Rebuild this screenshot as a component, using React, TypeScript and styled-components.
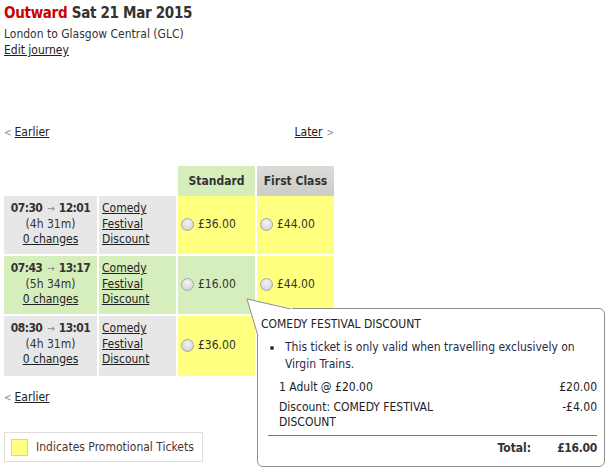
import styled, { createGlobalStyle } from "styled-components";

const GlobalStyle = createGlobalStyle`
  html, body {
    margin: 0;
    padding: 0;
    background: #fff;
  }
  body {
    font-family: "DejaVu Sans Condensed", "DejaVu Sans", sans-serif;
    font-size: 12px;
    color: #333;
  }
`;

const Page = styled.div`
  position: relative;
  width: 606px;
  height: 467px;
  box-sizing: border-box;
  padding: 3px 4px 0;
  overflow: hidden;
`;

const Heading = styled.h2`
  margin: 0;
  font-size: 15px;
  letter-spacing: -0.3px;
  line-height: 21px;
  font-weight: bold;
  color: #333;
  span {
    color: #cc0000;
  }
`;

const Route = styled.div`
  margin-top: 3px;
  line-height: 15px;
`;

const Link = styled.a`
  color: #222;
  text-decoration: underline;
  cursor: pointer;
`;

const EditRow = styled.div`
  margin-top: 1px;
  line-height: 15px;
`;

const Pager = styled.div<{ $top: number }>`
  display: flex;
  justify-content: space-between;
  width: 330px;
  margin-top: ${(p) => p.$top}px;
  line-height: 15px;
`;

const Chevron = styled.span<{ $side: "left" | "right" }>`
  color: #888;
  font-size: 10px;
  margin: ${(p) => (p.$side === "left" ? "0 3px 0 0" : "0 0 0 4px")};
`;

const Table = styled.div`
  width: 330px;
  margin-top: 26px;
  display: flex;
  flex-direction: column;
`;

const Row = styled.div<{ $height: number; $gap: number }>`
  display: grid;
  grid-template-columns: 93px 77px 77px 77px;
  column-gap: 2px;
  height: ${(p) => p.$height}px;
  margin-bottom: ${(p) => p.$gap}px;
`;

const HeadCell = styled.div<{ $tone?: "standard" | "first" }>`
  display: flex;
  align-items: center;
  justify-content: center;
  font-weight: bold;
  color: #333;
  background: ${(p) =>
    p.$tone === "standard"
      ? "#d6edbc"
      : p.$tone === "first"
      ? "linear-gradient(#dcdbd8, #cdccc9)"
      : "transparent"};
`;

const TimeCell = styled.div<{ $selected?: boolean }>`
  background: ${(p) => (p.$selected ? "#d6edbc" : "#e7e7e7")};
  text-align: center;
  padding-top: 5px;
  line-height: 15.5px;
  b {
    color: #333;
    letter-spacing: -0.6px;
  }
`;

const Arrow = styled.span`
  color: #888;
  font-size: 10px;
  margin: 0 4px 0 5px;
`;

const TicketCell = styled.div<{ $selected?: boolean }>`
  background: ${(p) => (p.$selected ? "#d6edbc" : "#e7e7e7")};
  padding: 5px 0 0 3px;
  line-height: 15.5px;
  a {
    display: block;
    width: fit-content;
  }
`;

const PriceCell = styled.div<{ $selected?: boolean }>`
  background: ${(p) => (p.$selected ? "#d6edbc" : "#ffff80")};
  display: flex;
  align-items: center;
  padding-left: 3px;
  padding-bottom: 2px;
  gap: 4px;
`;

const Radio = styled.span`
  width: 11px;
  height: 11px;
  border-radius: 50%;
  border: 1px solid #a8a8a8;
  background: radial-gradient(circle at 50% 35%, #f4f4f4 0%, #d9d9d9 70%, #c9c9c9 100%);
  box-sizing: content-box;
  flex: none;
`;

const Legend = styled.div`
  display: flex;
  align-items: center;
  gap: 8px;
  width: 199px;
  height: 30px;
  box-sizing: border-box;
  border: 1px solid #dedede;
  margin-top: 27px;
  padding-left: 6px;
  color: #4a3434;
`;

const Swatch = styled.span`
  width: 15px;
  height: 15px;
  background: #ffff80;
  border: 1px solid #cfcfcf;
`;

const Popup = styled.div`
  position: absolute;
  left: 257px;
  top: 308px;
  width: 348px;
  height: 159px;
  box-sizing: border-box;
  border: 1px solid #8f8f8f;
  border-radius: 6px;
  background: #fff;
  padding: 8px 7px 0 3px;
  line-height: 15px;
  color: #222;
`;

const Pointer = styled.svg`
  position: absolute;
  left: -13px;
  top: -12px;
  overflow: visible;
`;

const PopupTitle = styled.div`
  color: #222;
`;

const Bullets = styled.ul`
  list-style: none;
  margin: 7px 0 0;
  padding: 0 0 0 24px;
  line-height: 16.5px;
  color: #2a2a44;
  li {
    position: relative;
  }
  li::before {
    content: "";
    position: absolute;
    left: -15px;
    top: 7px;
    width: 4px;
    height: 4px;
    border-radius: 50%;
    background: #333;
  }
`;

const Line = styled.div<{ $top: number }>`
  display: grid;
  grid-template-columns: 165px 1fr;
  margin: ${(p) => p.$top}px 0 0 18px;
  span:last-child {
    text-align: right;
  }
`;

const Rule = styled.hr`
  border: 0;
  border-top: 1px solid #6b7887;
  margin: 5px 0 0 7px;
`;

const TotalRow = styled.div`
  display: flex;
  justify-content: flex-end;
  gap: 26px;
  margin-top: 5px;
  font-weight: bold;
  color: #333;
  span:last-child {
    letter-spacing: -0.3px;
  }
`;

const journeys = [
  { dep: "07:30", arr: "12:01", dur: "(4h 31m)", std: "£36.00", first: "£44.00" },
  { dep: "07:43", arr: "13:17", dur: "(5h 34m)", std: "£16.00", first: "£44.00", selected: true },
  { dep: "08:30", arr: "13:01", dur: "(4h 31m)", std: "£36.00" },
];

export default function App() {
  return (
    <>
      <GlobalStyle />
      <Page>
        <Heading>
          <span>Outward</span> Sat 21 Mar 2015
        </Heading>
        <Route>London to Glasgow Central (GLC)</Route>
        <EditRow>
          <Link>Edit journey</Link>
        </EditRow>

        <Pager $top={67}>
          <span>
            <Chevron $side="left">&lt;</Chevron>
            <Link>Earlier</Link>
          </span>
          <span>
            <Link>Later</Link>
            <Chevron $side="right">&gt;</Chevron>
          </span>
        </Pager>

        <Table>
          <Row $height={30} $gap={0}>
            <HeadCell />
            <HeadCell />
            <HeadCell $tone="standard">Standard</HeadCell>
            <HeadCell $tone="first">First Class</HeadCell>
          </Row>
          {journeys.map((j, i) => (
            <Row key={i} $height={i === 2 ? 60 : 58} $gap={2}>
              <TimeCell $selected={j.selected}>
                <b>{j.dep}</b>
                <Arrow>→</Arrow>
                <b>{j.arr}</b>
                <div>{j.dur}</div>
                <Link>0 changes</Link>
              </TimeCell>
              <TicketCell $selected={j.selected}>
                <Link>Comedy</Link>
                <Link>Festival</Link>
                <Link>Discount</Link>
              </TicketCell>
              <PriceCell $selected={j.selected}>
                <Radio />
                {j.std}
              </PriceCell>
              {j.first ? (
                <PriceCell>
                  <Radio />
                  {j.first}
                </PriceCell>
              ) : (
                <div />
              )}
            </Row>
          ))}
        </Table>

        <Pager $top={12}>
          <span>
            <Chevron $side="left">&lt;</Chevron>
            <Link>Earlier</Link>
          </span>
        </Pager>

        <Legend>
          <Swatch />
          Indicates Promotional Tickets
        </Legend>

        <Popup>
          <Pointer width="50" height="45" viewBox="0 0 50 45">
            <polygon points="2,2 13,40 15,40 15,13 47,13 47,11" fill="#fff" />
            <polyline points="13,39 2,2 46,12" fill="none" stroke="#8f8f8f" strokeWidth="1" />
          </Pointer>
          <PopupTitle>COMEDY FESTIVAL DISCOUNT</PopupTitle>
          <Bullets>
            <li>This ticket is only valid when travelling exclusively on Virgin Trains.</li>
          </Bullets>
          <Line $top={8}>
            <span>1 Adult @ £20.00</span>
            <span>£20.00</span>
          </Line>
          <Line $top={5}>
            <span>Discount: COMEDY FESTIVAL DISCOUNT</span>
            <span>-£4.00</span>
          </Line>
          <Rule />
          <TotalRow>
            <span>Total:</span>
            <span>£16.00</span>
          </TotalRow>
        </Popup>
      </Page>
    </>
  );
}
